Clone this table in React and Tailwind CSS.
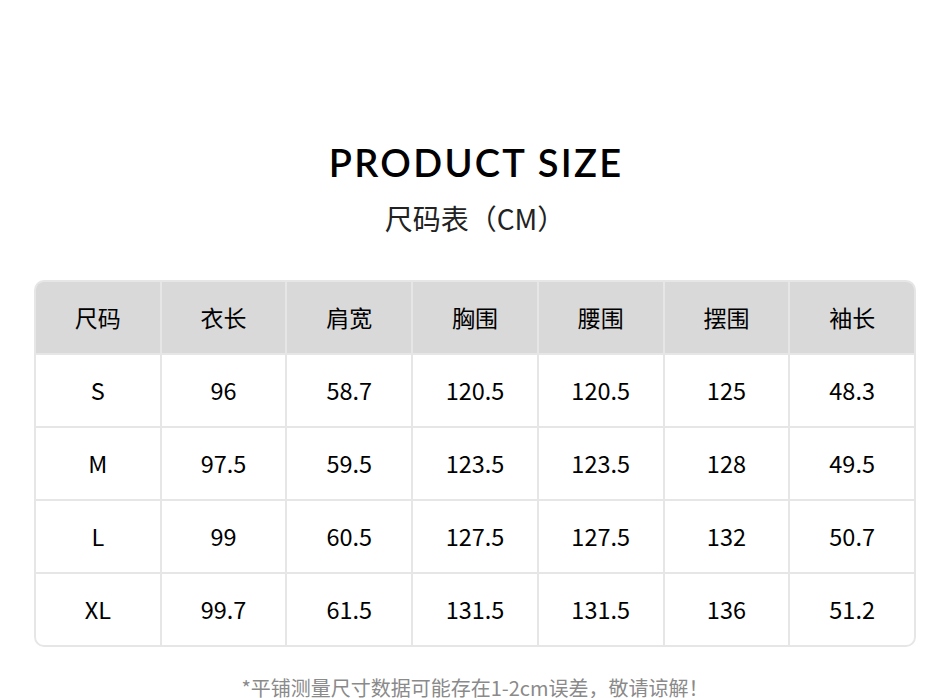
const headers = ['尺码', '衣长', '肩宽', '胸围', '腰围', '摆围', '袖长'];

const rows = [
  ['S', '96', '58.7', '120.5', '120.5', '125', '48.3'],
  ['M', '97.5', '59.5', '123.5', '123.5', '128', '49.5'],
  ['L', '99', '60.5', '127.5', '127.5', '132', '50.7'],
  ['XL', '99.7', '61.5', '131.5', '131.5', '136', '51.2'],
];

const cjk = { fontFamily: '"Noto Sans CJK SC", "Noto Sans", sans-serif' };

export default function App() {
  return (
    <div className="w-[950px] h-[698px] bg-white overflow-hidden" style={cjk}>
      <div className="pt-[139px] flex flex-col items-center">
        <h1
          className="text-[38px] leading-[46px] font-semibold tracking-[0.06em] text-black pl-[0.06em]"
          style={{ fontFamily: 'Lato, "Liberation Sans", sans-serif' }}
        >
          PRODUCT SIZE
        </h1>
        <div className="mt-[15px] text-[28px] leading-[36px] text-[#222]">尺码表（CM）</div>
      </div>

      <div className="mx-[34px] mt-[44px] w-[882px] rounded-[10px] border-2 border-[#e6e6e6] overflow-hidden">
        <div className="grid grid-cols-7 gap-[2px] bg-[#e6e6e6]">
          {headers.map((h) => (
            <div key={h} className="h-[71px] bg-[#d9d9d9] flex items-center justify-center text-[23px] text-black">
              {h}
            </div>
          ))}
          {rows.map((row) =>
            row.map((v, i) => (
              <div key={row[0] + i} className="h-[71px] bg-white flex items-center justify-center text-[23.5px] text-black">
                {v}
              </div>
            ))
          )}
        </div>
      </div>

      <div className="mt-[28px] text-center text-[20px] leading-[26px] text-[#8a8a8a]">
        *平铺测量尺寸数据可能存在1-2cm误差，敬请谅解！
      </div>
    </div>
  );
}
